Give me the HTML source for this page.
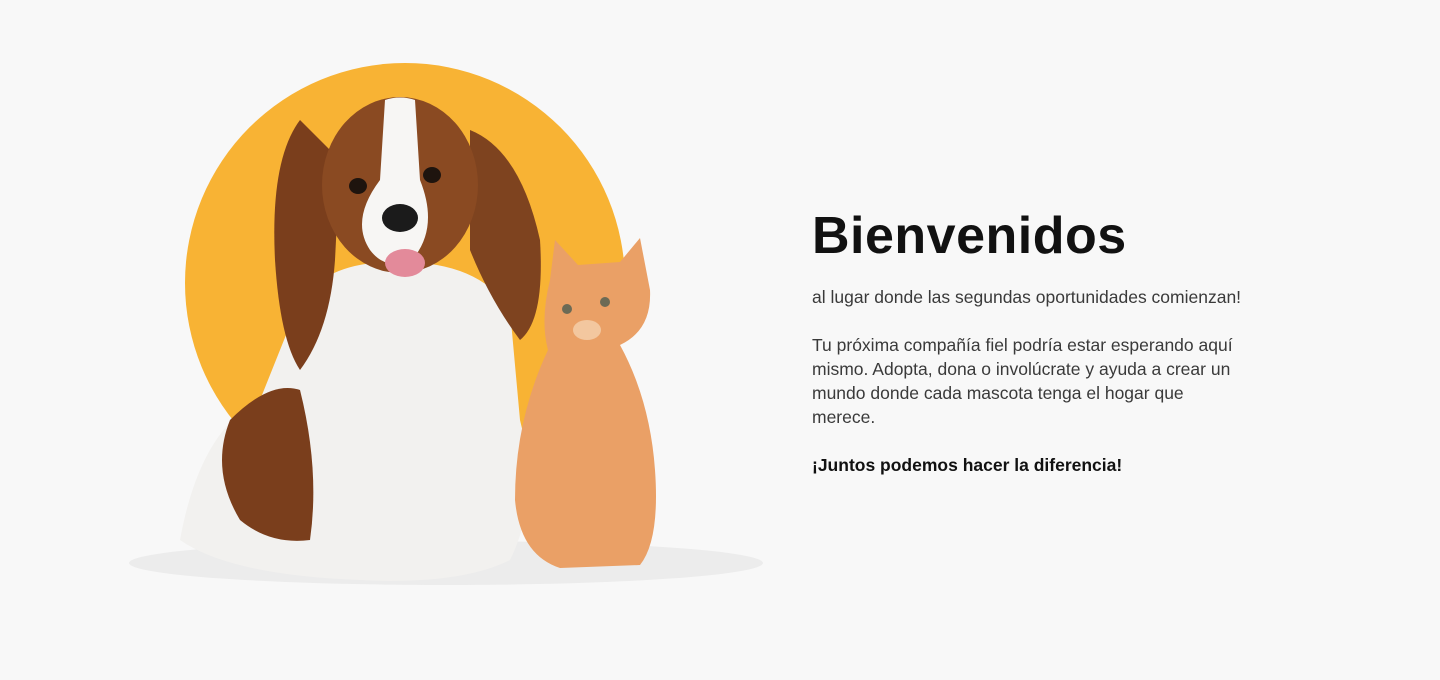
<!DOCTYPE html>
<html><head><meta charset="utf-8"><style>
html,body{margin:0;padding:0;background:#f8f8f8;width:1440px;height:680px;overflow:hidden;font-family:"Liberation Sans",sans-serif}
.t{position:absolute;left:812px;top:200px;width:426px;color:#222}
h1{margin:0;font-size:52px;font-weight:bold;color:#111;letter-spacing:0.5px;line-height:72px;white-space:nowrap}
p{margin:0;font-size:17.5px;line-height:24px;color:#3a3a3a}
</style></head><body>
<svg width="1440" height="680" style="position:absolute;left:0;top:0">
<ellipse cx="446" cy="563" rx="317" ry="22" fill="#ececec"/>
<circle cx="405" cy="283" r="220" fill="#f8b334"/>
<path d="M180 540 Q200 430 260 400 L300 300 Q330 260 400 262 Q480 262 510 310 L520 420 Q540 500 510 560 Q460 585 360 580 Q230 575 180 540Z" fill="#f2f1ef"/>
<path d="M300 120 Q270 160 275 260 Q280 340 300 370 Q330 330 335 260 L340 160Z" fill="#7a3e1c"/>
<path d="M470 130 Q520 150 540 240 Q545 320 520 340 Q490 300 470 250Z" fill="#7e431f"/>
<path d="M230 420 Q270 380 300 390 Q320 470 310 540 Q270 545 240 520 Q210 470 230 420Z" fill="#7a3e1c"/>
<ellipse cx="400" cy="185" rx="78" ry="88" fill="#8a4a22"/>
<path d="M385 100 Q400 95 415 100 L420 180 Q440 230 410 262 Q385 270 370 250 Q350 220 380 180Z" fill="#f7f6f4"/>
<ellipse cx="400" cy="218" rx="18" ry="14" fill="#1b1b1b"/>
<ellipse cx="358" cy="186" rx="9" ry="8" fill="#1e140e"/>
<ellipse cx="432" cy="175" rx="9" ry="8" fill="#1e140e"/>
<ellipse cx="405" cy="263" rx="20" ry="14" fill="#e38a9a"/>
<path d="M550 280 L555 240 L578 265 L620 262 L640 238 L650 290 Q652 330 620 345 Q650 400 655 470 Q660 540 640 565 L560 568 Q520 555 515 500 Q515 420 548 350 Q540 320 550 280Z" fill="#eaa066"/>
<circle cx="567" cy="309" r="5" fill="#6c6a55"/>
<circle cx="605" cy="302" r="5" fill="#6c6a55"/>
<ellipse cx="587" cy="330" rx="14" ry="10" fill="#f3c79f"/>
</svg>
<div class="t">
<h1>Bienvenidos</h1>
<p style="margin-top:13px;white-space:nowrap">al lugar donde las segundas oportunidades comienzan!</p>
<p style="margin-top:24px">Tu próxima compañía fiel podría estar esperando aquí mismo. Adopta, dona o involúcrate y ayuda a crear un mundo donde cada mascota tenga el hogar que merece.</p>
<p style="margin-top:24px;font-weight:bold;color:#111">¡Juntos podemos hacer la diferencia!</p>
</div>
</body></html>
